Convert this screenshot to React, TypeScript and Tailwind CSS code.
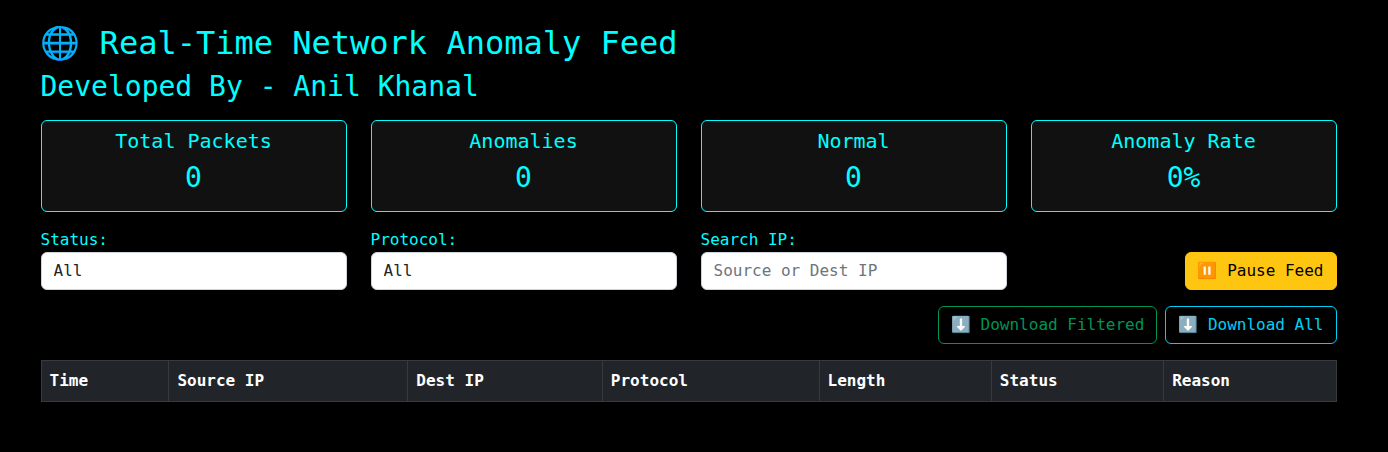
import { useState } from "react";

const stats = [
  { label: "Total Packets", value: "0" },
  { label: "Anomalies", value: "0" },
  { label: "Normal", value: "0" },
  { label: "Anomaly Rate", value: "0%" },
];

const columns = ["Time", "Source IP", "Dest IP", "Protocol", "Length", "Status", "Reason"];

const field =
  "block w-full appearance-none rounded-md border border-[#ced4da] bg-white px-3 py-1.5 text-base leading-6 text-[#212529] placeholder:text-[#6c757d]";
const button = "rounded-md border px-3 py-1.5 text-base leading-6";

export default function App() {
  const [paused, setPaused] = useState(false);

  return (
    <div className="min-h-screen bg-black py-6 pr-[11px] font-['DejaVu_Sans_Mono','Noto_Color_Emoji',monospace] text-base text-[#00ffff]">
      <main className="mx-auto max-w-[1320px] px-3">
        <h1 className="mb-2 text-[32px] leading-[38px]">🌐 Real-Time Network Anomaly Feed</h1>
        <h2 className="mb-4 text-[28px] leading-[34px]">Developed By - Anil Khanal</h2>

        <section className="mb-4 grid grid-cols-4 gap-6">
          {stats.map((s) => (
            <div key={s.label} className="rounded-md border border-[#00ffff] bg-[#111111] px-2 pt-2 pb-4 text-center">
              <h3 className="mb-2 text-xl leading-6">{s.label}</h3>
              <p className="text-[28px] leading-[34px]">{s.value}</p>
            </div>
          ))}
        </section>

        <section className="mb-4 grid grid-cols-4 items-end gap-6">
          <div>
            <label htmlFor="status" className="block">Status:</label>
            <select id="status" className={field}>
              <option>All</option>
              <option>Normal</option>
              <option>Anomaly</option>
            </select>
          </div>
          <div>
            <label htmlFor="protocol" className="block">Protocol:</label>
            <select id="protocol" className={field}>
              <option>All</option>
              <option>TCP</option>
              <option>UDP</option>
              <option>ICMP</option>
            </select>
          </div>
          <div>
            <label htmlFor="search" className="block">Search IP:</label>
            <input id="search" type="text" placeholder="Source or Dest IP" className={field} />
          </div>
          <div className="text-right">
            <button
              type="button"
              onClick={() => setPaused(!paused)}
              className={`${button} border-[#ffc611] bg-[#ffc611] text-black`}
            >
              {paused ? "▶️ Resume Feed" : "⏸️ Pause Feed"}
            </button>
          </div>
        </section>

        <div className="mb-4 flex justify-end gap-2">
          <button type="button" className={`${button} border-[#009454] text-[#009454]`}>⬇️ Download Filtered</button>
          <button type="button" className={`${button} border-[#00cff5] text-[#00cff5]`}>⬇️ Download All</button>
        </div>

        <table className="w-full border-collapse bg-[#212529] text-left text-white">
          <thead>
            <tr>
              {columns.map((c) => (
                <th key={c} scope="col" className="border border-[#373b3e] p-2 font-bold">{c}</th>
              ))}
            </tr>
          </thead>
        </table>
      </main>
    </div>
  );
}
